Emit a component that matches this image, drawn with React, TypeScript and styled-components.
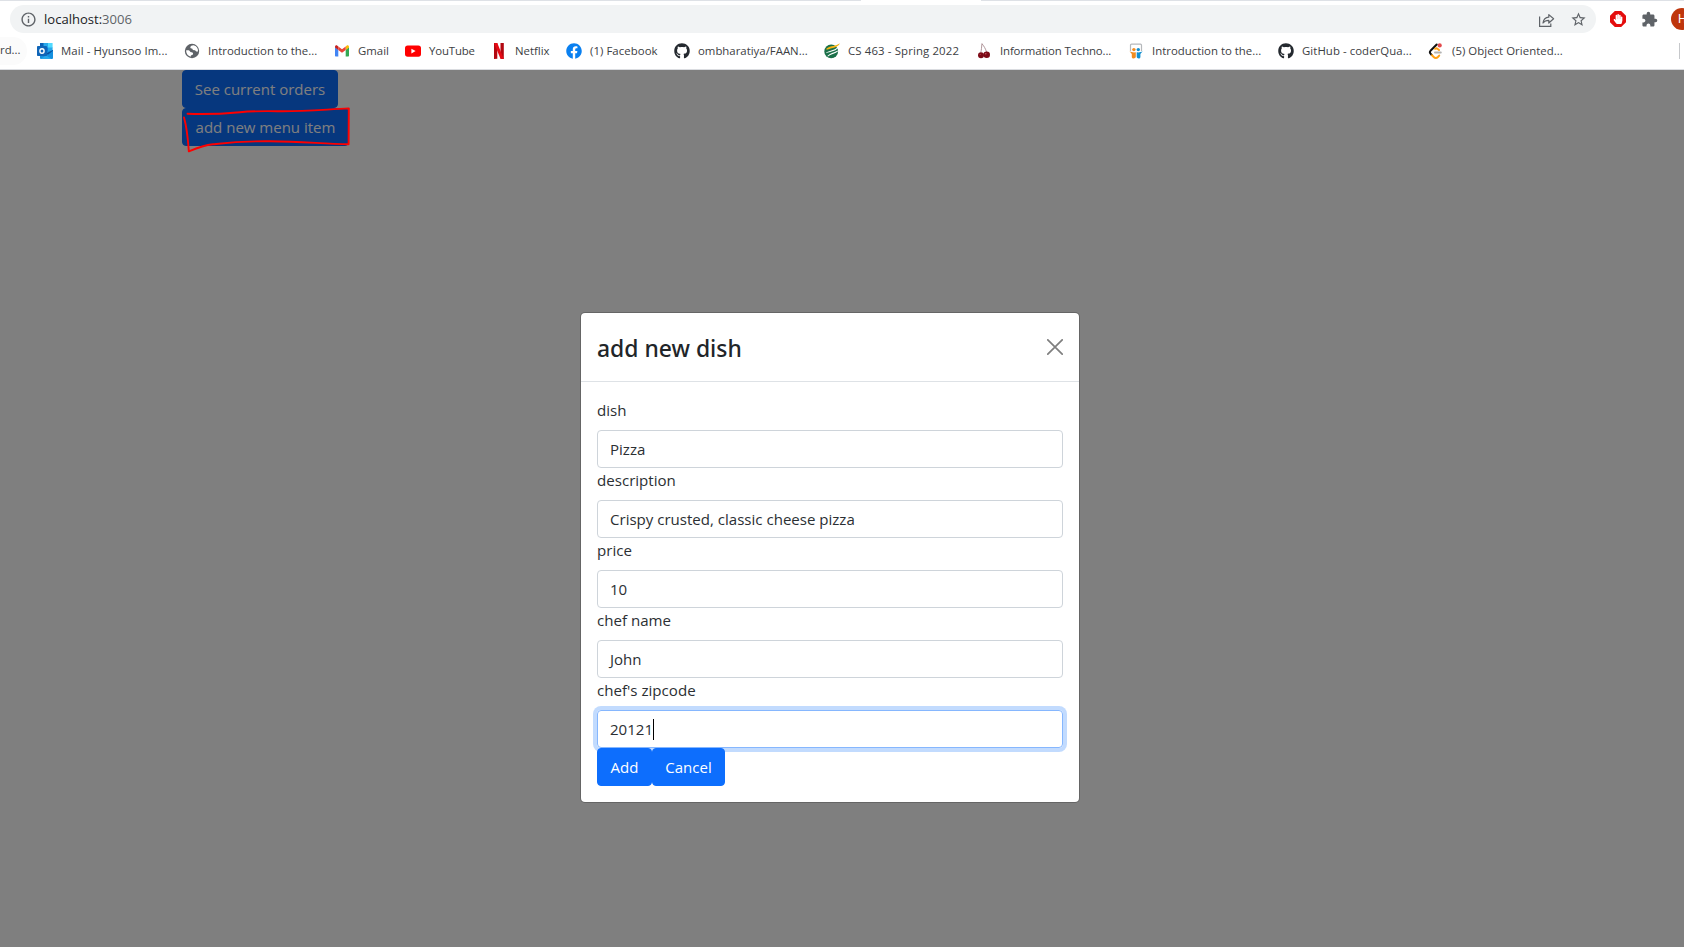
import React from 'react';
import styled, { createGlobalStyle, css } from 'styled-components';
import { MdExtension, MdInfoOutline, MdStarBorder } from 'react-icons/md';
import { FaFacebook, FaGithub, FaHandPaper } from 'react-icons/fa';

const GlobalStyle = createGlobalStyle`
  *, *::before, *::after { box-sizing: border-box; }
  body {
    margin: 0;
    overflow: hidden;
    font-family: "Open Sans", "Noto Sans", sans-serif;
    color: #2b2f33;
  }
  svg { display: block; flex: none; }
`;

const Window = styled.div`
  display: flex;
  flex-direction: column;
  width: 1684px;
  height: 947px;
  overflow: hidden;
  background: #fff;
`;

/* ---------- browser chrome ---------- */

const TabStrip = styled.div`
  display: flex;
  justify-content: space-between;
  flex: none;
  height: 5px;
`;

const StripEdge = styled.div<{ $width: number }>`
  width: ${(p) => p.$width}px;
  height: 1px;
  background: #dee1e6;
`;

const Toolbar = styled.div`
  display: flex;
  align-items: center;
  flex: none;
  height: 28px;
  padding-left: 10px;
`;

const AddressBar = styled.div`
  display: flex;
  align-items: center;
  flex: none;
  width: 1586px;
  height: 28px;
  padding: 0 9.5px;
  border-radius: 14px;
  background: #f1f3f4;
  color: #5f6368;
`;

const Address = styled.div`
  flex: 1;
  margin-left: 7.5px;
  font-size: 13.05px;
  line-height: 26px;
  span { color: #202124; }
`;

const AddressActions = styled.div`
  display: flex;
  align-items: center;
  gap: 15px;
`;

const Extensions = styled.div`
  display: flex;
  align-items: center;
  margin-left: 14px;
  color: #5f6368;
`;

const Puzzle = styled(MdExtension)`
  margin: 0 13px 0 15px;
`;

const Blocker = styled.div`
  display: grid;
  place-items: center;
  width: 16px;
  height: 16px;
  background: #e40d0d;
  color: #fff;
  clip-path: polygon(30% 0, 70% 0, 100% 30%, 100% 70%, 70% 100%, 30% 100%, 0 70%, 0 30%);
`;

const Avatar = styled.div`
  flex: none;
  width: 22px;
  height: 22px;
  padding-left: 7px;
  border-radius: 50%;
  background: #bf360c;
  color: #fff;
  font: 12px/22px Roboto, sans-serif;
`;

const Bookmarks = styled.div`
  display: flex;
  align-items: center;
  flex: none;
  height: 37px;
  border-bottom: 1px solid #dadce0;
`;

const Cut = styled.div`
  width: 27px;
  height: 28px;
  margin-right: 10px;
  border-radius: 0 14px 14px 0;
  background: #fbfbfb;
  color: #3c4043;
  font-size: 11.4px;
  line-height: 26px;
`;

const Bookmark = styled.div<{ $width: number; $track?: number }>`
  display: flex;
  align-items: center;
  flex: none;
  gap: 8px;
  width: ${(p) => p.$width}px;
  color: #3c4043;
  font-size: 11.4px;
  line-height: 26px;
  letter-spacing: ${(p) => p.$track ?? 0}px;
  white-space: nowrap;
  span { margin-top: -1px; }
`;

const Divider = styled.div`
  width: 1px;
  height: 16px;
  margin-left: 101px;
  background: #c6c8cb;
`;

/* ---------- page ---------- */

const Page = styled.div`
  position: relative;
  flex: 1;
`;

const Container = styled.main`
  display: flex;
  flex-direction: column;
  align-items: flex-start;
  padding-left: 182px;
`;

const Button = styled.button<{ $width: number }>`
  width: ${(p) => p.$width}px;
  height: 38px;
  padding: 0 0 1px;
  border: 1px solid #0d6efd;
  border-radius: 4px;
  background: #0d6efd;
  color: #fff;
  font: 15px/34px "Open Sans", sans-serif;
  white-space: nowrap;
`;

const Backdrop = styled.div`
  position: absolute;
  inset: 0;
  padding: 242px 0 0 580px;
  background: rgba(0, 0, 0, 0.5);
`;

const Dialog = styled.section`
  width: 500px;
  border: 1px solid rgba(0, 0, 0, 0.2);
  border-radius: 5px;
  background: #fff;
  background-clip: padding-box;
`;

const DialogHeader = styled.header`
  display: flex;
  align-items: center;
  justify-content: space-between;
  height: 69px;
  padding: 0 16px;
  border-bottom: 1px solid #dee2e6;
`;

const Title = styled.h2`
  margin: 3px 0 0;
  color: #212529;
  font-family: "Noto Sans", "Open Sans", sans-serif;
  font-size: 22.9px;
  font-weight: 500;
  line-height: 36px;
`;

const CloseIcon = styled.svg`
  color: #7f7f7f;
`;

const DialogBody = styled.form`
  padding: 16px;
`;

const Label = styled.label`
  display: block;
  height: 24px;
  margin-bottom: 8px;
  font-size: 15.1px;
  line-height: 25px;
`;

const Field = styled.div<{ $focused?: boolean }>`
  display: flex;
  align-items: center;
  height: 38px;
  padding: 0 12px;
  border: 1px solid #ced4da;
  border-radius: 4px;
  font-size: 15.05px;
  line-height: 34px;
  ${(p) =>
    p.$focused &&
    css`
      border-color: #86b7fe;
      box-shadow: 0 0 0 4px rgba(13, 110, 253, 0.25);
    `}
`;

const Caret = styled.i`
  width: 1px;
  height: 21px;
  background: #000;
`;

const Actions = styled.div`
  position: relative;
  display: flex;
`;

const Scribble = styled.svg`
  position: absolute;
  left: 180px;
  top: 34px;
`;

/* ---------- icons ---------- */

const OutlookIcon = () => (
  <svg width="16" height="16" viewBox="0 0 16 16">
    <path fill="#0a5fb4" d="M3 0h6.500v6H3z" />
    <path fill="#28a8ea" d="M6.500 0H11v5H6.500z" />
    <path fill="#50d9ff" d="M11 0h4.600v5H11z" />
    <path fill="#0f78d4" d="M5 4.500h6V10H5z" />
    <path fill="#28a8ea" d="M11 4.500h4.600v4H11z" />
    <path fill="#1490df" d="M3 10l13-3v8a1 1 0 0 1-1 1H4a1 1 0 0 1-1-1z" />
    <path fill="#0a50a0" d="M9 10.500l7-3.500v.8l-5 4z" />
    <path fill="#28a8ea" d="M3.500 16L9 12.500l5.500 3.300-.5.200z" />
    <rect y="3" width="10" height="10" rx=".8" fill="#0f65b8" />
    <ellipse cx="5" cy="8" rx="2.100" ry="2.300" fill="none" stroke="#fff" strokeWidth="1.400" />
  </svg>
);

const GlobeIcon = () => (
  <svg width="16" height="16" viewBox="0 0 16 16">
    <circle cx="8" cy="8" r="7.200" fill="#5f6368" />
    <path fill="#fff" d="M9.500 2.200C7.800 2.300 6.500 3 6.300 4.200c0 .9.700 1.200 1.600 1.300.9.200.4 1.300 1.300 1.600 1 .3 2.100-.1 2.600.9.300.7 1 .6 2.200.4A6 6 0 0 0 9.500 2.200zM2.200 7.300C2 10.500 4 13 6.700 13.800c.1-.9.300-1.500 1.300-1.700 1-.3 1.300-1.300.9-2.100-.5-.9-1.600-.5-2.400-1-.7-.6-.9-1.600-1.900-1.700z" />
  </svg>
);

const GmailIcon = () => (
  <svg width="16" height="16" viewBox="0 0 16 16">
    <path fill="#4285f4" d="M1 4v8.500c0 .6.400 1 1 1h2.300V6.800z" />
    <path fill="#34a853" d="M15 4v8.500c0 .6-.4 1-1 1h-2.300V6.800z" />
    <path fill="#fbbc04" d="M11.700 3.400V7L15 4.600V4c0-1.600-1.500-2-2.400-1.300z" />
    <path fill="#c5221f" d="M1 4c0-1.600 1.500-2 2.400-1.300l.9.700V7L1 4.600z" />
    <path fill="#ea4335" d="M4.300 3.400L8 6.200l3.700-2.800V7L8 9.800 4.300 7z" />
  </svg>
);

const YouTubeIcon = () => (
  <svg width="16" height="16" viewBox="0 0 16 16">
    <rect y="2.400" width="16" height="11.400" rx="2.700" fill="#f00" />
    <path fill="#fff" d="M6.400 5.700l4.200 2.400-4.200 2.400z" />
  </svg>
);

const NetflixIcon = () => (
  <svg width="16" height="16" viewBox="0 0 16 16">
    <path fill="#b20710" d="M3 0h3.300v15.700l-3.300.3zM9.500 0h3.300v16l-3.300-.3z" />
    <path fill="#e50914" d="M3 0h3.300l6.500 16-3.300-.3z" />
  </svg>
);

const CourseIcon = () => (
  <svg width="16" height="16" viewBox="0 0 16 16">
    <circle cx="7.200" cy="8.400" r="6.900" fill="#1b7049" />
    <path fill="#fff" d="M2.500 9.300C6 7.500 10 7.600 13.500 4.600l.3.700C11 8.600 6 8.500 2.300 10.200zM3.300 13C6 10.200 9.500 10 13.800 7.600l.1.900C10.500 11 7 11 3.900 13.600z" />
    <path fill="#f7b512" d="M2.500 5.400C7 2.500 11.500 3.200 15.800.2 14.500 4.500 8 4.800 2.500 6.800z" />
  </svg>
);

const CherryIcon = () => (
  <svg width="16" height="16" viewBox="0 0 16 16">
    <path d="M6 .5C5.500 4 5.500 7 4.800 9.500M6 .8C8 3 9.600 6 10.600 9" fill="none" stroke="#a78a90" strokeWidth=".9" />
    <circle cx="5" cy="12.300" r="3" fill="#7d0a16" />
    <circle cx="10.700" cy="11.800" r="3.300" fill="#7d0a16" />
    <circle cx="9.800" cy="10.800" r=".7" fill="#d4606a" />
    <circle cx="4.200" cy="11.600" r=".5" fill="#c04a56" />
  </svg>
);

const SlidesIcon = () => (
  <svg width="16" height="16" viewBox="0 0 16 16">
    <path d="M2.500 8V2.200c0-.7.400-1 1-1h9c.6 0 1 .3 1 1V8" fill="#fff" stroke="#b5b8bb" strokeWidth="1.200" />
    <circle cx="5.900" cy="6.600" r="1.700" fill="#f28c1f" />
    <circle cx="10.300" cy="6.600" r="1.700" fill="#1490d0" />
    <path fill="#f28c1f" d="M1.500 8.300c2 1.200 4.500 1.200 6.300 1v4.500c0 1.800-3.500 2.500-4 .5V11z" />
    <path fill="#1490d0" d="M14.700 8.300c-2 1.200-4.200 1.200-6 1v4.500c0 1.800 3.200 2.500 3.700.5V11z" />
  </svg>
);

const CodeIcon = () => (
  <svg width="16" height="16" viewBox="0 0 16 16" fill="none" strokeLinecap="round" strokeWidth="2">
    <path d="M8.700 1.500L2.500 7.800c-.8.9-.8 1.900 0 2.800l1.200 1.400" stroke="#111" />
    <path d="M4 12.300l1.700 1.700c1.200 1.200 3 1.200 4.200 0l1.300-1.400M7 5.800c1.200-.8 2-.5 2.800.2l1.200 1" stroke="#ffa116" />
    <path d="M7 9.500h5.800" stroke="#b3b3b3" />
    <circle cx="11.700" cy="2.400" r="2.100" fill="#e3494b" />
  </svg>
);

const ShareIcon = () => (
  <svg width="17" height="17" viewBox="0 0 17 17" fill="none" stroke="#5f6368" strokeWidth="1.200">
    <path d="M1.600 5.500v9.800h11.200v-2.800" />
    <path d="M5 12C5.500 8.500 7.300 6.400 10.800 6.200V3.600l4.800 4.200-4.800 4.200V9.300C8.200 9.300 6.400 10 5 12z" strokeLinejoin="round" />
  </svg>
);

/* ---------- data ---------- */

const bookmarks = [
  { label: 'Mail - Hyunsoo Im...', icon: <OutlookIcon />, width: 147, track: 0.09 },
  { label: 'Introduction to the...', icon: <GlobeIcon />, width: 150 },
  { label: 'Gmail', icon: <GmailIcon />, width: 71 },
  { label: 'YouTube', icon: <YouTubeIcon />, width: 86, track: -0.15 },
  { label: 'Netflix', icon: <NetflixIcon />, width: 75 },
  { label: '(1) Facebook', icon: <FaFacebook size={16} color="#0a80f0" />, width: 108, track: 0.06 },
  { label: 'ombharatiya/FAAN...', icon: <FaGithub size={16} color="#24292f" />, width: 150 },
  { label: 'CS 463 - Spring 2022', icon: <CourseIcon />, width: 152, track: 0.13 },
  { label: 'Information Techno...', icon: <CherryIcon />, width: 152, track: -0.14 },
  { label: 'Introduction to the...', icon: <SlidesIcon />, width: 150 },
  { label: 'GitHub - coderQua...', icon: <FaGithub size={16} color="#24292f" />, width: 150, track: 0.06 },
  { label: '(5) Object Oriented...', icon: <CodeIcon />, width: 150, track: 0.04 },
];

const fields = [
  { label: 'dish', value: 'Pizza' },
  { label: 'description', value: 'Crispy crusted, classic cheese pizza' },
  { label: 'price', value: '10' },
  { label: 'chef name', value: 'John' },
  { label: "chef's zipcode", value: '20121', focused: true },
];

export default function App() {
  return (
    <Window>
      <GlobalStyle />
      <TabStrip>
        <StripEdge $width={861} />
        <StripEdge $width={703} />
      </TabStrip>
      <Toolbar>
        <AddressBar>
          <MdInfoOutline size={17} />
          <Address>
            <span>localhost:</span>3006
          </Address>
          <AddressActions>
            <ShareIcon />
            <MdStarBorder size={17} />
          </AddressActions>
        </AddressBar>
        <Extensions>
          <Blocker>
            <FaHandPaper size={10} />
          </Blocker>
          <Puzzle size={17} />
          <Avatar>H</Avatar>
        </Extensions>
      </Toolbar>
      <Bookmarks>
        <Cut>rd...</Cut>
        {bookmarks.map((b, i) => (
          <Bookmark key={i} $width={b.width} $track={b.track}>
            {b.icon}
            <span>{b.label}</span>
          </Bookmark>
        ))}
        <Divider />
      </Bookmarks>
      <Page>
        <Container>
          <Button $width={156}>See current orders</Button>
          <Button $width={167}>add new menu item</Button>
        </Container>
        <Backdrop>
          <Dialog>
            <DialogHeader>
              <Title>add new dish</Title>
              <CloseIcon width="16" height="16" viewBox="0 0 16 16" stroke="currentColor" strokeWidth="1.700" strokeLinecap="round">
                <path d="M.8.8l14.400 14.400M15.200.8L.8 15.200" />
              </CloseIcon>
            </DialogHeader>
            <DialogBody>
              {fields.map((f) => (
                <React.Fragment key={f.label}>
                  <Label>{f.label}</Label>
                  <Field $focused={f.focused}>
                    {f.value}
                    {f.focused && <Caret />}
                  </Field>
                </React.Fragment>
              ))}
              <Actions>
                <Button type="button" $width={55}>Add</Button>
                <Button type="button" $width={73}>Cancel</Button>
              </Actions>
            </DialogBody>
          </Dialog>
        </Backdrop>
        <Scribble width="175" height="52" viewBox="180 104 175 52" fill="none" stroke="#fe0000" strokeWidth="1.900" strokeLinecap="round" strokeLinejoin="round">
          <path d="M187.500 113.800C205 114.500 225 113.600 240 112.200S262 111 280 111.300C305 111.500 325 109.500 348.800 108.400L348.600 144.300C320 143.500 300 141.600 270 141.300S225 143 213 144.300C203 145.500 197 148 188.800 151.300C188 140 187.500 130 184 117.500" />
        </Scribble>
      </Page>
    </Window>
  );
}
